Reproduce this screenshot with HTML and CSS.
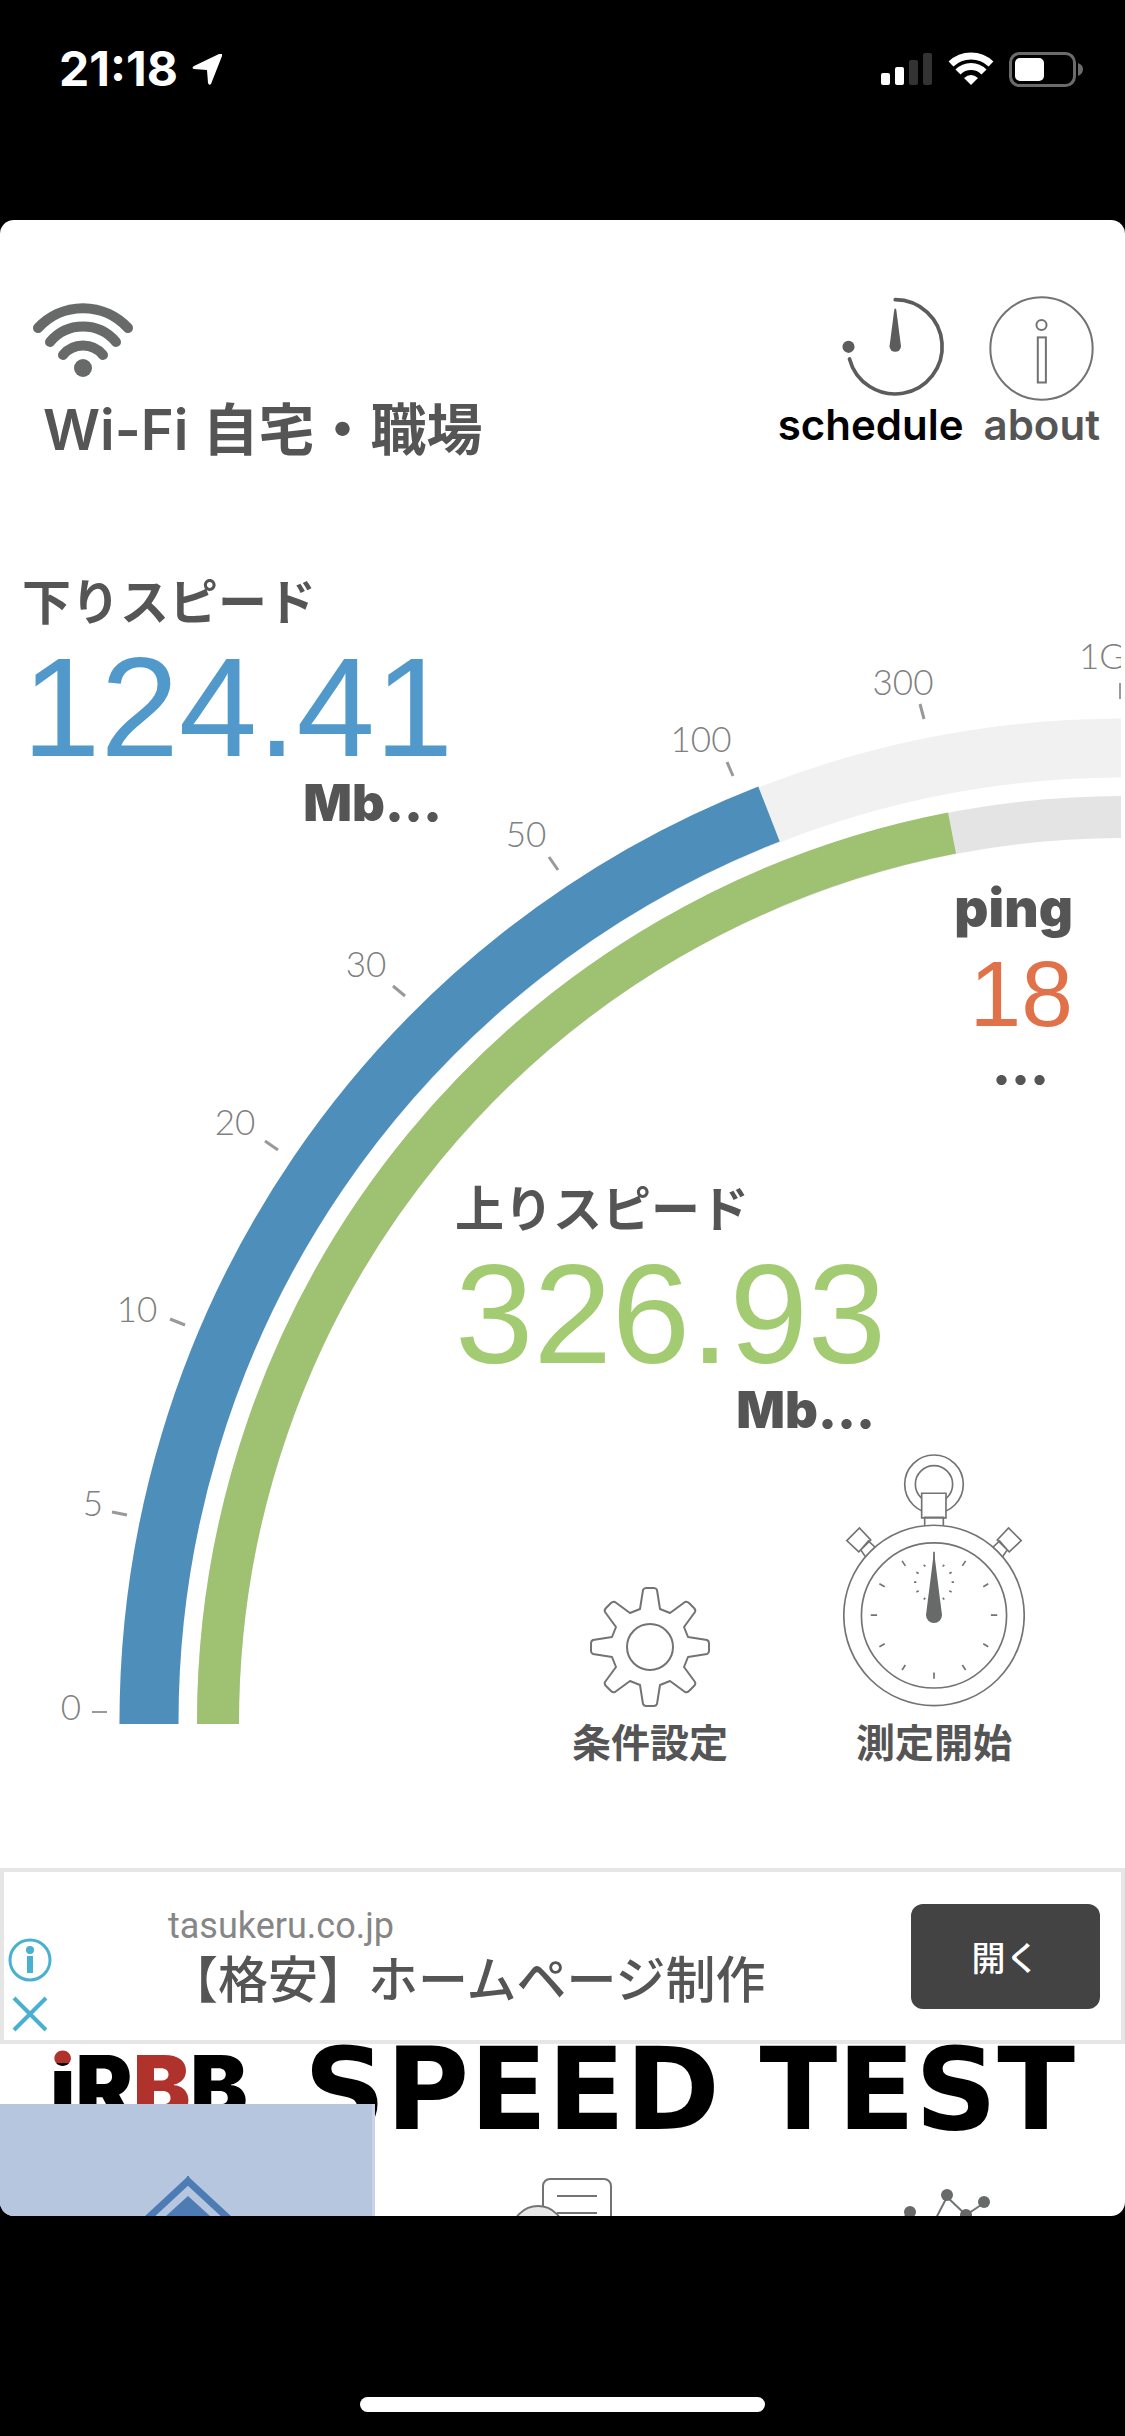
FILE: index.html
```
<!DOCTYPE html>
<html lang="ja">
<head>
	<meta charset="utf-8">
	<meta name="viewport" content="width=device-width">
	<title>RBB SPEED TEST</title>
	<link rel="stylesheet" href="styles.css">
</head>
<body>
<div class="status">
	<div class="clock">
		<span>21:18</span>
		<svg width="30" height="31" viewBox="0 0 30 31"><path d="M30 2 L19 30 Q17 32 16 29 L15 16 L2 15 Q-1 14 2 12 L27 0 Q31 -1 30 2z" fill="#fff"/></svg>
	</div>
	<div class="signals">
		<svg width="52" height="34" viewBox="0 0 52 34">
			<g fill="#fff"><rect x="0" y="21" width="9" height="12" rx="2"/><rect x="14" y="15" width="9" height="18" rx="2"/></g>
			<g fill="#333"><rect x="28" y="8" width="9" height="25" rx="2"/><rect x="42" y="1" width="9" height="32" rx="2"/></g>
		</svg>
		<svg width="46" height="34" viewBox="0 0 46 34">
			<g fill="none" stroke="#fff" stroke-width="7">
				<path d="M3 12 A29 29 0 0 1 43 12"/>
				<path d="M10 20 A18 18 0 0 1 36 20"/>
			</g>
			<path d="M16 26 Q23 20 30 26 L23 33z" fill="#fff"/>
		</svg>
		<svg width="74" height="35" viewBox="0 0 74 35">
			<rect x="1.5" y="1.5" width="64" height="32" rx="9" fill="none" stroke="#6b6b6b" stroke-width="3"/>
			<rect x="6" y="6" width="29" height="23" rx="5" fill="#fff"/>
			<path d="M69 11 Q74 13 74 17 Q74 22 69 24z" fill="#6b6b6b"/>
		</svg>
	</div>
</div>

<main class="card">
	<header class="top">
		<div class="network">
			<svg width="104" height="76" viewBox="0 0 104 76">
				<g fill="none" stroke="#676a69" stroke-width="10" stroke-linecap="round">
					<path d="M7 26 A61 61 0 0 1 97 26"/>
					<path d="M19 40 A43 43 0 0 1 85 40"/>
					<path d="M32 53 A26 26 0 0 1 72 53"/>
				</g>
				<circle cx="52" cy="66" r="9" fill="#676a69"/>
			</svg>
			<h1>Wi-Fi 自宅・職場</h1>
		</div>
		<div class="tools">
			<button class="tool schedule">
				<svg width="124" height="105" viewBox="180 77 368 312">
					<path d="M344 88 A140 140 0 1 1 208 264" fill="none" stroke="#5c5c5c" stroke-width="11" stroke-linecap="round"/>
					<circle cx="205" cy="228" r="18" fill="#5c5c5c"/>
					<path d="M341 118 Q344 110 347 118 L361 226 A17 17 0 0 1 327 226z" fill="#5c5c5c"/>
				</svg>
				schedule
			</button>
			<button class="tool about">
				<svg width="105" height="105" viewBox="628 76 312 312" fill="none" stroke="#737373" stroke-width="6">
					<circle cx="784" cy="232" r="152"/>
					<circle cx="784" cy="162" r="15"/>
					<rect x="773" y="199" width="24" height="134"/>
				</svg>
				about
			</button>
		</div>
	</header>

	<section class="dial">
		<svg class="gauge" viewBox="0 560 1121 1164">
			<!-- tracks -->
			<g fill="none">
				<circle cx="1124" cy="1723" r="975" stroke="#f1f1f1" stroke-width="59"/>
				<circle cx="1124" cy="1723" r="906" stroke="#e4e4e4" stroke-width="42"/>
				<path d="M149 1724 A975 975 0 0 1 769 814" stroke="#4e8ebb" stroke-width="59"/>
				<path d="M218 1724 A906 906 0 0 1 952 833" stroke="#9ec172" stroke-width="42"/>
			</g>
			<g stroke="#999" stroke-width="3">
				<path d="M92 1712H107" stroke-width="2"/>
				<path d="M112 1512L127 1515"/>
				<path d="M170 1319L185 1325"/>
				<path d="M265 1141L278 1150"/>
				<path d="M393 986L405 996"/>
				<path d="M549 857L558 870"/>
				<path d="M727 762L733 776"/>
				<path d="M920 704L924 719"/>
				<path d="M1120 683V699" stroke-width="2"/>
			</g>
			<g class="scale">
				<text x="71" y="1720">0</text>
				<text x="93" y="1516">5</text>
				<text x="137" y="1322">10</text>
				<text x="235" y="1135">20</text>
				<text x="366" y="977">30</text>
				<text x="526" y="847">50</text>
				<text x="701" y="752">100</text>
				<text x="903" y="695">300</text>
				<text x="1102" y="669">1G</text>
			</g>
		</svg>

		<div class="readings">
			<div class="speed down">
				<h2>下りスピード</h2>
				<p class="value">124.41</p>
				<p class="unit">Mb…</p>
			</div>
			<div class="ping">
				<h2>ping</h2>
				<p class="value">18</p>
				<p class="unit">…</p>
			</div>
			<div class="speed up">
				<h2>上りスピード</h2>
				<p class="value">326.93</p>
				<p class="unit">Mb…</p>
			</div>
			<div class="controls">
				<button>
					<svg width="120" height="120" viewBox="-60 -60 120 120" fill="#fff" stroke="#737373" stroke-width="2" stroke-linejoin="round">
						<path d="M-10 -38 L-7 -57 Q-6 -59 -4 -59 H4 Q6 -59 7 -57 L10 -38 L20 -34 L35 -45 Q37 -46 39 -44 L44 -39 Q46 -37 45 -35 L34 -20 L38 -10 L57 -7 Q59 -6 59 -4 V4 Q59 6 57 7 L38 10 L34 20 L45 35 Q46 37 44 39 L39 44 Q37 46 35 45 L20 34 L10 38 L7 57 Q6 59 4 59 H-4 Q-6 59 -7 57 L-10 38 L-20 34 L-35 45 Q-37 46 -39 44 L-44 39 Q-46 37 -45 35 L-34 20 L-38 10 L-57 7 Q-59 6 -59 4 V-4 Q-59 -6 -57 -7 L-38 -10 L-34 -20 L-45 -35 Q-46 -37 -44 -39 L-39 -44 Q-37 -46 -35 -45 L-20 -34z"/>
						<circle r="23"/>
					</svg>
					条件設定
				</button>
				<button>
					<svg width="182" height="253" viewBox="72 72 546 760" fill="#fff" stroke="#737373" stroke-width="5">
						<circle cx="345" cy="163" r="88"/>
						<circle cx="345" cy="163" r="56"/>
						<path d="M317 262H373V290H317zM308 190H381V264H308z"/>
						<path d="M125 360L148 333L168 352L140 382zM83 332L121 294L155 330L119 366z"/>
						<path d="M565 360L542 333L522 352L550 382zM607 332L569 294L535 330L571 366z"/>
						<circle cx="345" cy="557" r="271"/>
						<circle cx="345" cy="557" r="218"/>
						<path d="M345 366V386M345 728V747M155 556H174M516 556H535M249 393L259 408M440 393L430 408M181 462L197 471M508 462L493 471M181 651L197 642M508 651L493 642M249 721L259 706M440 721L430 706"/>
						<path d="M314 405L319 410M376 405L371 410M292 427L299 431M398 427L391 431M285 457H292M398 457H405M292 487L299 483M398 487L391 483M314 509L319 504M376 509L371 504"/>
						<path d="M345 366L369 556A24 24 0 0 1 321 556z" fill="#676a69" stroke="none"/>
					</svg>
					測定開始
				</button>
			</div>
		</div>
	</section>

	<aside class="ad">
		<div class="marks">
			<svg width="44" height="44" viewBox="0 0 44 44">
				<circle cx="22" cy="22" r="20" fill="none" stroke="#4ab0d2" stroke-width="3"/>
				<circle cx="22" cy="12" r="4" fill="#4ab0d2"/>
				<path d="M22 18V35" stroke="#4ab0d2" stroke-width="6"/>
			</svg>
			<svg width="44" height="36" viewBox="0 0 44 36"><path d="M6 2L38 34M38 2L6 34" stroke="#4ab0d2" stroke-width="4"/></svg>
		</div>
		<div class="copy">
			<p class="host">tasukeru.co.jp</p>
			<p class="headline">【格安】ホームページ制作</p>
		</div>
		<button class="open">開く</button>
	</aside>

	<footer>
		<div class="brand">
			<span class="rbb"><span class="i">i</span>R<span class="red">B</span>B</span>
			<span class="name">SPEED TEST</span>
		</div>
		<nav class="tabs">
			<button class="active" aria-label="home">
				<svg width="96" height="42" viewBox="-4 0 96 42">
					<path d="M46 7L5 45M46 7L87 45" fill="none" stroke="#4d7bb3" stroke-width="7" stroke-linecap="square"/>
					<path d="M46 22L24 42H68z" fill="#4d7bb3"/>
				</svg>
			</button>
			<button aria-label="history">
				<svg width="98" height="42" viewBox="0 0 98 42" fill="#fff" stroke="#737373" stroke-width="2">
					<rect x="29" y="5" width="68" height="60" rx="7"/>
					<path d="M43 22H83M43 39H83"/>
					<circle cx="24" cy="58" r="26" fill="#e8e8e8"/>
				</svg>
			</button>
			<button aria-label="graph">
				<svg width="108" height="42" viewBox="-16 0 108 42">
					<path d="M10 37L-2 50M33 50L47 23L66 41L84 29" fill="none" stroke="#737373" stroke-width="2"/>
					<g fill="#676a69"><circle cx="10" cy="38" r="6"/><circle cx="47" cy="21" r="6"/><circle cx="66" cy="41" r="6"/><circle cx="84" cy="28" r="6"/></g>
				</svg>
			</button>
		</nav>
	</footer>
</main>

<div class="home"></div>
</body>
</html>
```

FILE: styles.css
```
* { box-sizing: border-box; }
body {
	margin: 0; background: black;
	min-height: 100vh;
	display: flex; flex-direction: column;
	font-family: Inter, "Noto Sans CJK JP", sans-serif;
	color: #555;
}
h1, h2, p { margin: 0; }
svg { display: block; flex: none; }
button {
	margin: 0; padding: 0;
	border: 0; background: none;
	font: inherit; color: inherit;
	cursor: pointer;
}

.status {
	display: flex; justify-content: space-between; align-items: flex-start;
	height: 220px;
	padding: 42px 42px 0 59px;
	color: white;
}
.clock {
	display: flex; align-items: center; gap: 14px;
	font-size: 48px; line-height: 54px; font-weight: 700;
}
.signals { display: flex; align-items: center; gap: 15px; height: 54px; }

.card {
	background: white;
	border-radius: 14px;
	overflow: hidden;
}

.top {
	display: flex; justify-content: space-between;
	padding: 76px 25px 0 31px;
	margin-bottom: 98px;
}
.network { padding-top: 6px; }
.network h1 {
	padding: 20px 0 0 12px;
	font-size: 56px; line-height: 64px; font-weight: 600;
}
.tools { display: flex; align-items: flex-start; gap: 20px; }
.tool {
	display: flex; flex-direction: column; align-items: center;
	font-size: 42px; line-height: 48px; font-weight: 600;
}
.schedule { align-items: flex-end; color: black; }

/* readings are stacked over the gauge in one grid cell */
.dial { display: grid; margin-bottom: 101px; }
.gauge, .readings { grid-area: 1 / 1; }
.gauge { width: calc(100% - 4px); }
.scale text {
	font-family: Lato, sans-serif;
	font-size: 35px; font-weight: 300;
	fill: #808080;
	text-anchor: middle;
}
.readings {
	display: flex; flex-direction: column;
	padding-top: 11px;
}
.readings h2 { font-size: 49px; line-height: 64px; font-weight: 700; }
.value {
	font-family: "Liberation Sans", sans-serif;
	font-size: 141px; line-height: 144px;
}
.unit { font-size: 51px; line-height: 48px; font-weight: 900; }
.speed { width: 420px; }
.speed .unit { text-align: right; }
.down { margin-left: 22px; }
.down .value { color: #5299cb; }
.up { margin: 88px 0 0 455px; }
.up .value { color: #a3cb72; }
.ping {
	align-self: flex-end;
	margin-top: 43px; padding-right: 52px;
	text-align: right;
}
.ping h2 { font-size: 53px; line-height: 76px; font-weight: 900; }
.ping .value { font-size: 93px; line-height: 96px; color: #e07148; }
.ping .unit { padding-right: 24px; }
.controls {
	display: flex; justify-content: flex-end; align-items: flex-end;
	gap: 115px;
	margin-top: 20px; padding-right: 100px;
}
.controls button {
	display: flex; flex-direction: column; align-items: center; gap: 12px;
	font-size: 39px; line-height: 48px; font-weight: 700;
}

.ad {
	display: flex; align-items: center;
	height: 176px;
	padding-right: 21px;
	border: 4px solid #e6e6e6;
}
.marks {
	display: flex; flex-direction: column; gap: 14px;
	align-self: flex-end;
	padding: 0 0 8px 4px;
}
.copy { flex: 1; padding-left: 116px; white-space: nowrap; }
.host { font-family: Roboto, sans-serif; font-size: 36px; line-height: 48px; color: #868686; }
.headline { font-size: 50px; line-height: 60px; font-weight: 500; }
.open {
	width: 189px; height: 105px;
	border-radius: 12px;
	background: #434343; color: white;
	font-size: 34px; font-weight: 500;
}

.brand {
	display: flex; align-items: flex-start; justify-content: space-between;
	height: 90px;
	padding: 0 50px;
	color: black;
	font-weight: 900; white-space: nowrap;
}
.rbb { font-size: 86px; line-height: 86px; }
.rbb .red { color: #b0322c; }
.rbb .i {
	background: linear-gradient(#b0322c 28px, black 28px);
	-webkit-background-clip: text; background-clip: text;
	color: transparent;
}
.name { font-family: "DejaVu Sans", sans-serif; font-size: 114px; font-weight: 700; line-height: 92px; }
.tabs {
	display: grid; grid-template-columns: repeat(3, 1fr);
	height: 112px;
	margin-top: -30px;
	position: relative;
}
.tabs button {
	display: flex; justify-content: center; align-items: flex-end;
}
.tabs .active { background: #b6c6df; border-right: 3px solid #c8d2e8; }

.home {
	width: 36%; height: 15px;
	margin: auto auto 24px;
	border-radius: 8px;
	background: white;
}
```
